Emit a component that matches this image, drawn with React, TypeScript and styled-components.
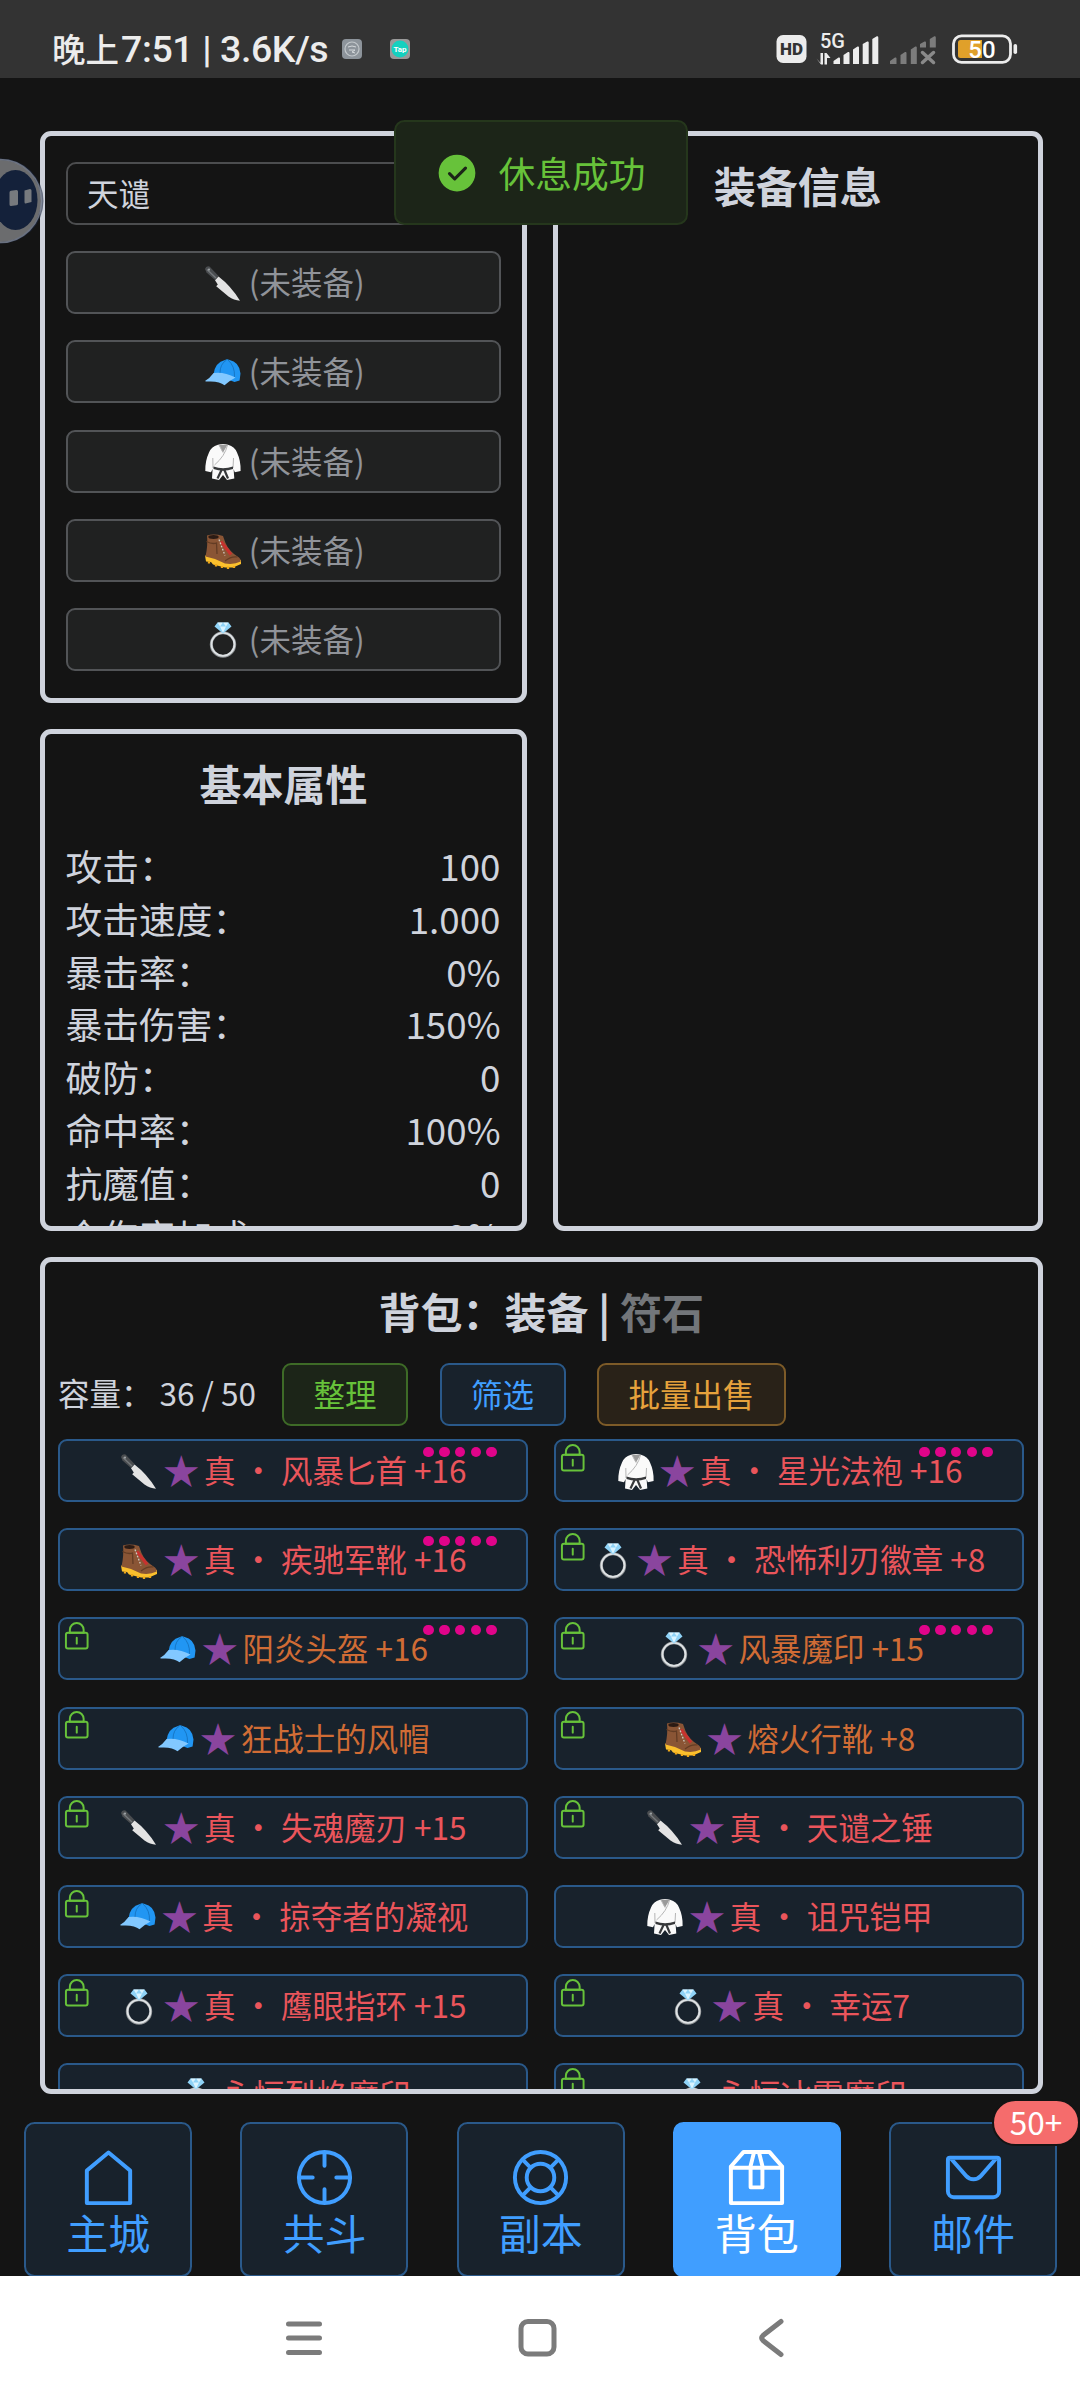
import { ReactNode } from "react";
import styled, { createGlobalStyle, css } from "styled-components";

const GlobalStyle = createGlobalStyle`
  * {
    box-sizing: border-box;
  }
  body {
    margin: 0;
    background: #141414;
    color: #cfd3dc;
    font-family: "Noto Sans CJK SC", "Noto Sans", sans-serif;
    font-size: 31.5px;
  }
`;

const Screen = styled.div`
  width: 1080px;
  height: 2400px;
  display: flex;
  flex-direction: column;
  overflow: hidden;
`;

/* ---------- status bar ---------- */

const StatusBar = styled.header`
  flex: none;
  height: 78px;
  padding: 20px 62px 0 52px;
  background: #333;
  color: #ececec;
  display: flex;
  align-items: center;
`;

const Clock = styled.div`
  display: flex;
  align-items: center;
  height: 58px;
  width: 290px;
  font-family: Roboto, "Noto Sans CJK SC", sans-serif;
  font-size: 37.5px;
  font-weight: 500;
  letter-spacing: -0.4px;
  white-space: pre;
`;

const ClockPeriod = styled.span`
  font-family: "Noto Sans CJK SC", sans-serif;
  font-size: 33.5px;
  letter-spacing: 0;
  margin: -3px 2px 0 0;
`;

const NoticeIcons = styled.div`
  flex: 1;
  display: flex;
  gap: 28px;
  svg {
    display: block;
  }
`;

const StatusIcons = styled.div`
  display: flex;
  align-items: center;
  gap: 11px;
  svg {
    display: block;
    overflow: visible;
  }
  svg:last-child {
    margin-left: 4px;
  }
`;

/* ---------- game area ---------- */

const Game = styled.main`
  position: relative;
  flex: none;
  height: 2198px;
  padding: 53px 37.5px 0 40px;
  display: flex;
  flex-direction: column;
  overflow: hidden;
`;

const TopGrid = styled.div`
  flex: none;
  display: grid;
  grid-template-columns: 487px 489.5px;
  column-gap: 26px;
  height: 1100px;
`;

const Column = styled.div`
  display: flex;
  flex-direction: column;
  gap: 26px;
  min-height: 0;
`;

const Panel = styled.section<{ $height?: number }>`
  flex: none;
  height: ${(p) => (p.$height ? `${p.$height}px` : "100%")};
  border: 5px solid #cfd3dc;
  border-radius: 11px;
  overflow: hidden;
`;

const EquipPanel = styled(Panel)`
  padding: 26px 21px 0;
  display: flex;
  flex-direction: column;
  gap: 26.2px;
`;

const PanelTitle = styled.h2`
  margin: 18.5px 0 0;
  line-height: 60px;
  font-size: 42px;
  font-weight: 700;
  text-align: center;
  white-space: pre;
`;

const Muted = styled.span`
  color: #73767a;
`;

const NameInput = styled.div`
  flex: none;
  height: 63px;
  padding-left: 19px;
  border: 2px solid #4c4d4f;
  border-radius: 10px;
  line-height: 57px;
`;

const tones = {
  info: css`
    color: #909399;
    background: #202121;
    border-color: #525457;
  `,
  primary: css`
    color: #409eff;
    background: #18222c;
    border-color: #2a598a;
  `,
  success: css`
    color: #67c23a;
    background: #1c2518;
    border-color: #3e6b27;
  `,
  warning: css`
    color: #e6a23c;
    background: #292218;
    border-color: #7d5b28;
  `,
};

type Tone = keyof typeof tones;

const Button = styled.button<{ $tone: Tone }>`
  flex: none;
  position: relative;
  display: flex;
  align-items: center;
  justify-content: center;
  height: 63px;
  padding: 0 29.5px 2px;
  border: 2px solid;
  border-radius: 9px;
  font: inherit;
  line-height: 57px;
  white-space: pre;
  ${(p) => tones[p.$tone]}
`;

const EmojiBox = styled.svg`
  flex: none;
  width: 36px;
  height: 36px;
  margin: 4px 7.9px 0 2.4px;
  overflow: visible;
`;

/* ---------- stats ---------- */

const Stats = styled.dl`
  margin: 26.5px 21.5px 0 20.5px;
  font-size: 36.75px;
  line-height: 52.8px;
`;

const StatRow = styled.div`
  display: flex;
  justify-content: space-between;
  dt,
  dd {
    margin: 0;
  }
`;

/* ---------- bag ---------- */

const BagPanel = styled(Panel)`
  margin-top: 26px;
`;

const Toolbar = styled.div`
  display: flex;
  align-items: center;
  gap: 31.5px;
  height: 63px;
  margin-top: 22.5px;
  padding-left: 13px;
`;

const Capacity = styled.span`
  width: 192.5px;
  margin-top: -6px;
  white-space: pre;
`;

const ItemGrid = styled.div`
  display: grid;
  grid-template-columns: 469.6px 469.4px;
  column-gap: 26.6px;
  row-gap: 26.2px;
  margin-top: 13px;
  padding-left: 13px;
`;

const Item = styled(Button)`
  padding: 0 0 2px;
`;

const Star = styled.span`
  display: flex;
  justify-content: center;
  width: 31.5px;
  margin-right: 7px;
  font-size: 36px;
  color: #8a459e;
`;

const ItemName = styled.span<{ $color: string }>`
  color: ${(p) => p.$color};
`;

const LockMark = styled.svg`
  position: absolute;
  left: 0.6px;
  top: 0.6px;
  width: 31.5px;
  height: 31.5px;
  fill: #67c23a;
`;

const Sockets = styled.span`
  position: absolute;
  top: 5.5px;
  right: 28.8px;
  display: flex;
  gap: 5.25px;
`;

const Socket = styled.i`
  width: 10.5px;
  height: 10.5px;
  border-radius: 50%;
  background: #e0048a;
`;

/* ---------- tabs ---------- */

const TabBar = styled.nav`
  flex: none;
  display: grid;
  grid-template-columns: repeat(5, 216.2px);
  justify-items: center;
  margin: 28px 0 0 -39.8px;
`;

const Tab = styled.button<{ $active?: boolean }>`
  position: relative;
  width: 168px;
  height: 155px;
  padding: 22px 0 0;
  border: 2px solid;
  border-radius: 10.5px;
  display: flex;
  flex-direction: column;
  align-items: center;
  font: inherit;
  font-size: 42px;
  line-height: 45.5px;
  ${tones.primary}
  ${(p) =>
    p.$active &&
    css`
      color: #fff;
      background: #409eff;
      border-color: #409eff;
    `}
  svg {
    display: block;
    width: 63px;
    height: 63px;
    fill: currentColor;
  }
`;

const Badge = styled.sup`
  position: absolute;
  top: -25px;
  right: -25px;
  width: 88px;
  height: 47px;
  border: 2px solid #141414;
  border-radius: 24px;
  background: #f56c6c;
  color: #fff;
  font-size: 31.5px;
  line-height: 41px;
  text-align: center;
`;

/* ---------- floating parts ---------- */

const Toast = styled.div`
  position: absolute;
  left: 394px;
  top: 42px;
  width: 294px;
  height: 105px;
  border: 2px solid #25371c;
  border-radius: 10.5px;
  background: #1c2518;
  color: #67c23a;
  font-size: 36.75px;
  line-height: 1;
  display: flex;
  align-items: center;
  gap: 21px;
  padding-left: 39.5px;
  svg {
    width: 42px;
    height: 42px;
    fill: currentColor;
  }
`;

const AssistBall = styled.svg`
  position: absolute;
  left: 0;
  top: 77px;
  width: 48px;
  height: 92px;
`;

const SystemNav = styled.footer`
  flex: 1;
  background: #fff;
  display: grid;
  grid-template-columns: repeat(3, 40px);
  justify-content: center;
  column-gap: 194.5px;
  padding: 40px 5px 0 0;
  svg {
    display: block;
    fill: none;
    stroke: #7b7b7b;
    stroke-width: 5;
    stroke-linecap: round;
    stroke-linejoin: round;
  }
`;

/* ---------- drawings ---------- */

type Slot = "knife" | "cap" | "robe" | "boot" | "ring";

const emojiShapes: Record<Slot, ReactNode> = {
  knife: (
    <>
      <path d="M0 3Q1-.5 4.5.5L13.5 10 10 14 1.5 6.5Z" fill="#4a4d50" />
      <path d="M2 3.5 11 12" stroke="#74787b" strokeWidth="1.4" />
      <circle cx="4" cy="3.6" r="1.1" fill="#9da1a4" />
      <path d="M13.5 10.5Q26 20 35 34.7 29 34.5 23.5 30.5L11.2 20.3 12.8 18.5 10 14.2Z" fill="#e3e3e3" />
    </>
  ),
  cap: (
    <>
      <path d="M8.6 19Q10 7.5 20 5 22 3.6 24 4.8 34.5 7 35.5 18.5L34.6 25.5 29.5 27Z" fill="#2196f3" />
      <path d="M21.5 5Q15 9 15 18M23 5Q30 11 29.5 22" stroke="#1573bf" strokeWidth=".9" fill="none" />
      <path d="M0 26Q5 23 8.6 18 19 16.5 30.5 22.5 24 26 19.5 30.2 14 25.5 1 26.6Z" fill="#82c8ff" />
    </>
  ),
  robe: (
    <>
      <path d="M13 .8Q18-.6 23 .8 30 3 32 8.5 36 17 35.6 27L29.8 28.3 28.6 25 29.3 34.5 22 36 18 31 14 36 7 34.5 7.6 25 6 28.3.3 27Q0 17 4 8.5 6 3 13 .8Z" fill="#fafafa" />
      <path d="M14 .8H22.5L18 8.5Z" fill="#9a9a9a" />
      <path d="M22.5 1Q20 12 9.5 21M14 1 18 8.5M7.8 14 8 24M28.5 14 28 24" stroke="#b5b5b5" strokeWidth="1" fill="none" />
      <path d="M8.5 22.5Q18 26 28 22.5V25Q18 28.5 8.5 25Z" fill="#37393b" />
      <path d="M17 25 12.5 34.5M19 25 23 34.5" stroke="#37393b" strokeWidth="2.2" />
    </>
  ),
  boot: (
    <>
      <path d="M0 22.5 1 28.5 6 29 8 31.5 20 34.5H28L36 31V27Z" fill="#fbc02d" />
      <path d="M2 2.5Q9 .5 18 3L20.5 10Q24 18.5 34 24.5 36 26 35.7 28.5 29 32 20 30.5L10 26 .5 23.5Q3 12 2 2.5Z" fill="#8a5535" />
      <path d="M1.5 8.5Q7 11.5 11.5 10L12 21" stroke="#633c24" strokeWidth="1.3" fill="none" />
      <path d="M20 28Q26 23 32.5 24" stroke="#633c24" strokeWidth="1.1" fill="none" />
      <ellipse cx="8.5" cy="4" rx="5.2" ry="1.9" fill="#2b1b14" />
      <path d="M16 8.5 26 21.5" stroke="#c8322f" strokeWidth="3" />
      <path d="M14 6.5 20 22.5" stroke="#d0c8c2" strokeWidth="1.3" strokeDasharray="1.8 1.5" />
      <path d="M4 28.5 4 30.5M11 31V33.5M17 33V35M23 33.5V36M29 33V35" stroke="#f0a818" strokeWidth="2.3" />
    </>
  ),
  ring: (
    <>
      <circle cx="18" cy="22.5" r="11.7" fill="none" stroke="#8d9194" strokeWidth="3" />
      <circle cx="18" cy="22.3" r="11.5" fill="none" stroke="#dfe3e5" strokeWidth="1.8" />
      <path d="M12.5.5H23.5L26.5 4.5 18 11.5 9.5 4.5Z" fill="#8fd3f7" />
      <path d="M12.5.5 15 4.5 18 .5 21 4.5 23.5.5M15 4.5 18 11 21 4.5Z" fill="#d9f3ff" />
    </>
  ),
};

const Emoji = ({ slot }: { slot: Slot }) => (
  <EmojiBox viewBox="0 0 36 36">{emojiShapes[slot]}</EmojiBox>
);

const Lock = () => (
  <LockMark viewBox="0 0 1024 1024">
    <path d="M224 448a32 32 0 0 0-32 32v384a32 32 0 0 0 32 32h576a32 32 0 0 0 32-32V480a32 32 0 0 0-32-32zm0-64h576a96 96 0 0 1 96 96v384a96 96 0 0 1-96 96H224a96 96 0 0 1-96-96V480a96 96 0 0 1 96-96" />
    <path d="M512 544a32 32 0 0 1 32 32v192a32 32 0 1 1-64 0V576a32 32 0 0 1 32-32m192-160v-64a192 192 0 1 0-384 0v64zM512 64a256 256 0 0 1 256 256v128H256V320A256 256 0 0 1 512 64" />
  </LockMark>
);

const tabIcons = {
  house: (
    <path d="M192 413.952V896h640V413.952L512 147.328zM139.52 374.4l352-293.312a32 32 0 0 1 40.96 0l352 293.312A32 32 0 0 1 896 398.976V928a32 32 0 0 1-32 32H160a32 32 0 0 1-32-32V398.976a32 32 0 0 1 11.52-24.576" />
  ),
  aim: (
    <>
      <path d="M512 896a384 384 0 1 0 0-768 384 384 0 0 0 0 768m0 64a448 448 0 1 1 0-896 448 448 0 0 1 0 896" />
      <path d="M512 96a32 32 0 0 1 32 32v192a32 32 0 0 1-64 0V128a32 32 0 0 1 32-32m0 576a32 32 0 0 1 32 32v192a32 32 0 1 1-64 0V704a32 32 0 0 1 32-32M96 512a32 32 0 0 1 32-32h192a32 32 0 0 1 0 64H128a32 32 0 0 1-32-32m576 0a32 32 0 0 1 32-32h192a32 32 0 1 1 0 64H704a32 32 0 0 1-32-32" />
    </>
  ),
  help: (
    <g fill="none" stroke="currentColor" strokeWidth="64">
      <circle cx="512" cy="512" r="416" />
      <circle cx="512" cy="512" r="224" />
      <path d="M218 218 354 354M806 218 670 354M218 806 354 670M806 806 670 670" />
    </g>
  ),
  box: (
    <>
      <path d="M317.056 128 128 344.064V896h768V344.064L706.944 128zm-14.528-64h418.944a32 32 0 0 1 24.064 10.88l206.528 236.096A32 32 0 0 1 960 332.032V928a32 32 0 0 1-32 32H96a32 32 0 0 1-32-32V332.032a32 32 0 0 1 7.936-21.12L278.4 75.008A32 32 0 0 1 302.528 64" />
      <path d="M64 320h896v64H64z" />
      <path d="M448 327.872V640h128V327.872L526.08 128h-28.16zM448 64h128l64 256v352a32 32 0 0 1-32 32H416a32 32 0 0 1-32-32V320z" />
    </>
  ),
  message: (
    <>
      <path d="M128 224v512a64 64 0 0 0 64 64h640a64 64 0 0 0 64-64V224zm0-64h768a64 64 0 0 1 64 64v512a128 128 0 0 1-128 128H192A128 128 0 0 1 64 736V224a64 64 0 0 1 64-64" />
      <path d="M904 224 656.512 506.88a192 192 0 0 1-289.024 0L120 224zm-698.944 0 210.56 240.704a128 128 0 0 0 192.704 0L818.944 224z" />
    </>
  ),
};

/* ---------- data ---------- */

const slots: Slot[] = ["knife", "cap", "robe", "boot", "ring"];

const stats = [
  ["攻击：", "100"],
  ["攻击速度：", "1.000"],
  ["暴击率：", "0%"],
  ["暴击伤害：", "150%"],
  ["破防：", "0"],
  ["命中率：", "100%"],
  ["抗魔值：", "0"],
  ["全伤害加成：", "0%"],
];

const RED = "#ea555b";
const ORANGE = "#d06c35";

type BagItem = {
  slot: Slot;
  name: string;
  color?: string;
  locked?: boolean;
  sockets?: number;
  star?: boolean;
};

const items: BagItem[] = [
  { slot: "knife", name: "真 ・ 风暴匕首 +16", sockets: 5 },
  { slot: "robe", name: "真 ・ 星光法袍 +16", sockets: 5, locked: true },
  { slot: "boot", name: "真 ・ 疾驰军靴 +16", sockets: 5 },
  { slot: "ring", name: "真 ・ 恐怖利刃徽章 +8", locked: true },
  { slot: "cap", name: "阳炎头盔 +16", color: ORANGE, sockets: 5, locked: true },
  { slot: "ring", name: "风暴魔印 +15", color: ORANGE, sockets: 5, locked: true },
  { slot: "cap", name: "狂战士的风帽", color: ORANGE, locked: true },
  { slot: "boot", name: "熔火行靴 +8", color: ORANGE, locked: true },
  { slot: "knife", name: "真 ・ 失魂魔刃 +15", locked: true },
  { slot: "knife", name: "真 ・ 天谴之锤", locked: true },
  { slot: "cap", name: "真 ・ 掠夺者的凝视", locked: true },
  { slot: "robe", name: "真 ・ 诅咒铠甲" },
  { slot: "ring", name: "真 ・ 鹰眼指环 +15", locked: true },
  { slot: "ring", name: "真 ・ 幸运7", locked: true },
  { slot: "ring", name: "永恒烈焰魔印", star: false },
  { slot: "ring", name: "永恒冰霜魔印", star: false, locked: true },
];

const tabs: { icon: keyof typeof tabIcons; label: string; badge?: string }[] = [
  { icon: "house", label: "主城" },
  { icon: "aim", label: "共斗" },
  { icon: "help", label: "副本" },
  { icon: "box", label: "背包" },
  { icon: "message", label: "邮件", badge: "50+" },
];

const PhoneStatus = () => (
  <StatusBar>
    <Clock>
      <ClockPeriod>晚上</ClockPeriod>
      {"7:51 | 3.6K/s"}
    </Clock>
    <NoticeIcons>
      <svg width="20" height="20" viewBox="0 0 20 20">
        <rect width="20" height="20" rx="4" fill="#8d949b" />
        <circle cx="10" cy="10" r="7" fill="none" stroke="#c3c8cc" strokeWidth="1.2" />
        <path d="M6 8Q10 6 14 8M7 11H13L10 13 13 14" stroke="#d5d9dc" fill="none" />
      </svg>
      <svg width="20" height="20" viewBox="0 0 20 20">
        <rect width="20" height="20" rx="4" fill="#999" />
        <circle cx="10" cy="10" r="8.5" fill="#14d1bf" />
        <text x="10" y="12.5" fontSize="8" fontWeight="700" fontFamily="Roboto, sans-serif" fill="#fff" textAnchor="middle">
          Tap
        </text>
      </svg>
    </NoticeIcons>
    <StatusIcons>
      <svg width="30" height="28" viewBox="0 0 30 28">
        <rect x="2.5" width="30" height="28" rx="6.5" fill="#ececec" />
        <text x="17.5" y="20" fontSize="17" fontWeight="900" fontFamily="Roboto, sans-serif" fill="#333" textAnchor="middle">
          HD
        </text>
      </svg>
      <svg width="64" height="32" viewBox="0 0 64 32" fill="#ececec">
        <text x="5" y="15" fontSize="20" fontFamily="Roboto, sans-serif" fontWeight="500">
          5G
        </text>
        <path d="M1.5 25.5 5.5 30V20H8V31.5H6ZM9.5 20H11.5L15.5 25H12V31.5H9.5Z" />
        <path d="M18.5 31V28L23.5 24.5Q25 24 25 25.5V31ZM28.5 31V22L33 19Q34.5 18.5 34.5 20V31ZM38 31V16.5L42.5 13.5Q44 13 44 14.5V31ZM47.7 31V11L52.2 8.5Q53.7 8 53.7 9.5V31ZM57.3 31V6L61.8 3.3Q63.3 3 63.3 4.5V31Z" />
      </svg>
      <svg width="46" height="32" viewBox="0 0 46 32" fill="#7c7c7c">
        <path d="M0 31V28L5 24.5Q6.5 24 6.5 25.5V31ZM10.5 31V22L15 19Q16.5 18.5 16.5 20V31ZM20.8 31V16.5L25.3 13.5Q26.8 13 26.8 14.5V31ZM30 14.5V11L34.5 8.5Q36 8 36 9.5V14.5ZM39.8 14.5V6L44.3 3.3Q45.8 3 45.8 4.5V14.5Z" />
        <path d="M32.5 19.5 43.5 29.5M43.5 19.5 32.5 29.5" stroke="#8a8a8a" strokeWidth="3.5" strokeLinecap="round" />
      </svg>
      <svg width="67" height="30" viewBox="0 0 67 30">
        <rect x="2.5" y="1.8" width="57" height="26.5" rx="8" fill="none" stroke="#ececec" strokeWidth="2.8" />
        <path d="M9.5 6H31V24H9.5Q7 24 7 21.5V8.5Q7 6 9.5 6Z" fill="#e0a02a" />
        <rect x="62.5" y="10" width="3.6" height="10" rx="1.8" fill="#ececec" />
        <text x="31" y="23.5" fontSize="24" fontWeight="500" fontFamily="Roboto, sans-serif" fill="#fff" textAnchor="middle">
          50
        </text>
      </svg>
    </StatusIcons>
  </StatusBar>
);

const Bag = () => (
  <BagPanel $height={837}>
    <PanelTitle>
      背包：装备 | <Muted>符石</Muted>
    </PanelTitle>
    <Toolbar>
      <Capacity>容量： 36 / 50</Capacity>
      <Button $tone="success">整理</Button>
      <Button $tone="primary">筛选</Button>
      <Button $tone="warning">批量出售</Button>
    </Toolbar>
    <ItemGrid>
      {items.map((item) => (
        <Item key={item.name} $tone="primary">
          {item.locked && <Lock />}
          <Emoji slot={item.slot} />
          {item.star !== false && <Star>★</Star>}
          <ItemName $color={item.color ?? RED}>{item.name}</ItemName>
          {item.sockets && (
            <Sockets>
              {Array.from({ length: item.sockets }, (_, i) => (
                <Socket key={i} />
              ))}
            </Sockets>
          )}
        </Item>
      ))}
    </ItemGrid>
  </BagPanel>
);

const App = () => {
  return (
    <Screen>
      <GlobalStyle />
      <PhoneStatus />
      <Game>
        <TopGrid>
          <Column>
            <EquipPanel $height={572}>
              <NameInput>天谴</NameInput>
              {slots.map((slot) => (
                <Button key={slot} $tone="info">
                  <Emoji slot={slot} />
                  (未装备)
                </Button>
              ))}
            </EquipPanel>
            <Panel $height={502}>
              <PanelTitle>基本属性</PanelTitle>
              <Stats>
                {stats.map(([label, value]) => (
                  <StatRow key={label}>
                    <dt>{label}</dt>
                    <dd>{value}</dd>
                  </StatRow>
                ))}
              </Stats>
            </Panel>
          </Column>
          <Panel>
            <PanelTitle>装备信息</PanelTitle>
          </Panel>
        </TopGrid>
        <Bag />
        <TabBar>
          {tabs.map((tab) => (
            <Tab key={tab.icon} $active={tab.icon === "box"}>
              <svg viewBox="0 0 1024 1024">{tabIcons[tab.icon]}</svg>
              {tab.label}
              {tab.badge && <Badge>{tab.badge}</Badge>}
            </Tab>
          ))}
        </TabBar>
        <Toast>
          <svg viewBox="0 0 1024 1024">
            <path d="M512 64a448 448 0 1 1 0 896 448 448 0 0 1 0-896m-55.808 536.384-99.52-99.584a38.4 38.4 0 1 0-54.336 54.336l126.72 126.72a38.272 38.272 0 0 0 54.336 0l262.4-262.464a38.4 38.4 0 1 0-54.272-54.336z" />
          </svg>
          休息成功
        </Toast>
        <AssistBall viewBox="0 0 48 92">
          <circle cx="1" cy="46" r="42.5" fill="#1a2740" opacity=".6" />
          <circle cx="0" cy="46" r="41" fill="#6b6c6e" />
          <circle cx="0" cy="46" r="41.5" fill="none" stroke="#8b93a3" strokeWidth="1.5" opacity=".7" />
          <ellipse cx="15.5" cy="45" rx="22" ry="30" fill="#14213a" />
          <path d="M9.5 37.5Q9.5 36 11 35.8L16.5 35Q18 35 18 36.5V49Q18 50 16.5 50.2L11 51Q9.5 51 9.5 49.5ZM24.5 35.5 30 34Q31.5 34 31.5 35.5V47L25.5 48.5Q24.5 48.5 24.5 47Z" fill="#777a7e" />
        </AssistBall>
      </Game>
      <SystemNav>
        <svg width="40" height="50" viewBox="0 0 40 50">
          <path d="M5.5 8H36.5M5.5 22H36.5M5.5 36.5H36.5" />
        </svg>
        <svg width="40" height="50" viewBox="0 0 40 50">
          <rect x="3" y="5.5" width="33" height="32.5" rx="7" />
        </svg>
        <svg width="40" height="50" viewBox="0 0 40 50">
          <path d="M29 5.5 11 19.5Q8.5 22 11 24.5L29 38.5" />
        </svg>
      </SystemNav>
    </Screen>
  );
};

export default App;
